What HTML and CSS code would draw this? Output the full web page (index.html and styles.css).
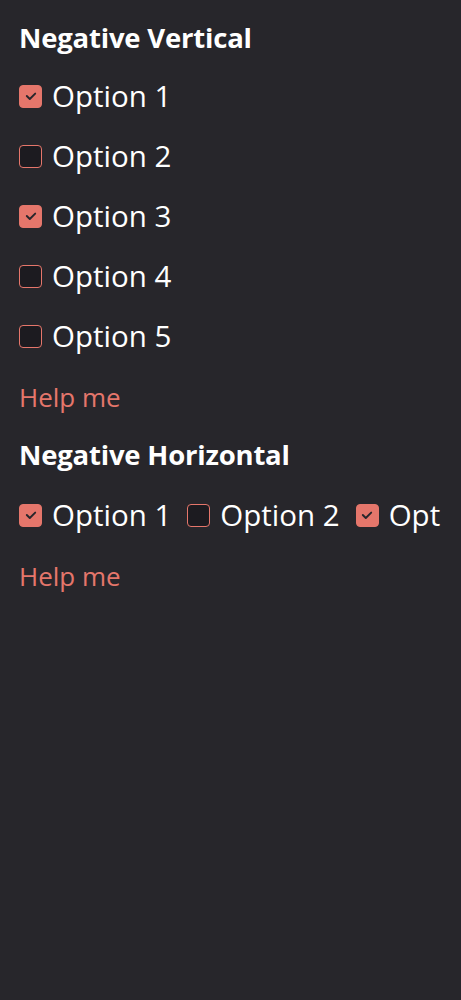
FILE: index.html
```html
<!DOCTYPE html>
<html>
<head>
<meta charset="utf-8">
<link rel="stylesheet" href="styles.css">
</head>
<body>
<div class="page">
  <section class="group">
    <h2 class="title">Negative Vertical</h2>
    <div class="options vertical">
      <label class="option"><span class="box checked"><svg viewBox="0 0 22 22"><path d="M6.8 11l3 3 5.4-5.4"/></svg></span><span class="text">Option 1</span></label>
      <label class="option"><span class="box"></span><span class="text">Option 2</span></label>
      <label class="option"><span class="box checked"><svg viewBox="0 0 22 22"><path d="M6.8 11l3 3 5.4-5.4"/></svg></span><span class="text">Option 3</span></label>
      <label class="option"><span class="box"></span><span class="text">Option 4</span></label>
      <label class="option"><span class="box"></span><span class="text">Option 5</span></label>
    </div>
    <div class="help">Help me</div>
  </section>
  <section class="group">
    <h2 class="title">Negative Horizontal</h2>
    <div class="options horizontal">
      <label class="option"><span class="box checked"><svg viewBox="0 0 22 22"><path d="M6.8 11l3 3 5.4-5.4"/></svg></span><span class="text">Option 1</span></label>
      <label class="option"><span class="box"></span><span class="text">Option 2</span></label>
      <label class="option"><span class="box checked"><svg viewBox="0 0 22 22"><path d="M6.8 11l3 3 5.4-5.4"/></svg></span><span class="text">Option 3</span></label>
    </div>
    <div class="help">Help me</div>
  </section>
</div>
</body>
</html>
```
FILE: styles.css
```css
html, body {
  margin: 0;
  padding: 0;
  background: #27262b;
  height: 100%;
}
body {
  font-family: "Open Sans", "Noto Sans", sans-serif;
  color: #ffffff;
}
.page {
  padding: 20px 20px 0 19px;
}
.group {
  display: flex;
  flex-direction: column;
}
.title {
  margin: 0;
  font-size: 27.5px;
  font-weight: 700;
  line-height: 36px;
  letter-spacing: -0.2px;
}
.options {
  display: flex;
}
.options.vertical {
  flex-direction: column;
  margin-top: 22px;
  gap: 24px;
}
.options.horizontal {
  flex-direction: row;
  margin-top: 20px;
  padding: 4px 0;
  gap: 16px;
  white-space: nowrap;
  overflow: hidden;
}
.option {
  display: flex;
  align-items: center;
  gap: 10px;
  height: 36px;
  flex-shrink: 0;
}
.box {
  width: 23px;
  height: 23px;
  box-sizing: border-box;
  border: 1.5px solid #e5766b;
  border-radius: 4px;
  background: #1c1b20;
  display: flex;
  align-items: center;
  justify-content: center;
  flex-shrink: 0;
}
.box.checked {
  background: #e5766b;
  border-color: #e5766b;
}
.box svg {
  width: 22px;
  height: 22px;
  flex-shrink: 0;
}
.box svg path {
  fill: none;
  stroke: #27262b;
  stroke-width: 1.9;
  stroke-linecap: round;
  stroke-linejoin: round;
}
.text {
  font-size: 29.5px;
  font-weight: 400;
  line-height: 36px;
}
.help {
  color: #e5766b;
  font-size: 26px;
  line-height: 36px;
  margin-top: 25px;
  margin-bottom: 22px;
}
.horizontal + .help {
  margin-top: 21px;
}
```
